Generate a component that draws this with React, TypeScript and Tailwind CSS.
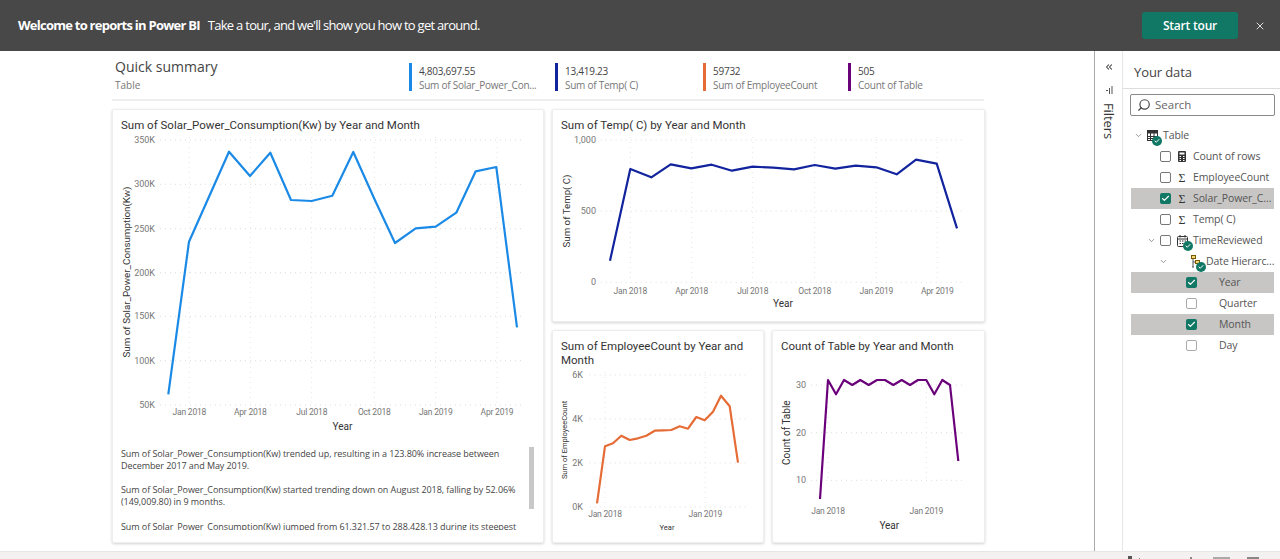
import { Check, ChevronDown, ChevronsLeft, Search, X } from "lucide-react";

const din = "Roboto, 'Liberation Sans', sans-serif";

type ChartProps = {
  box: [number, number, number, number];
  color: string;
  xs: number[];
  ys: number[];
  hGrid: number[];
  vGrid: number[];
  gridFrom: number;
  gridTo: number;
  yLabels: string[];
  xLabels: string[];
  labelRight: number;
  labelX: number;
  yearX: number;
  yearY: number;
  axisX: number;
  axisY: number;
  axisLabel: string;
  axisSize: number;
  yearSize?: number;
};

function LineChart(p: ChartProps) {
  const pts = p.xs.map((x, i) => x + "," + p.ys[i]).join(" ");
  return (
    <svg
      viewBox={p.box.join(" ")}
      width={p.box[2]}
      height={p.box[3]}
      className="block shrink-0"
      style={{ fontFamily: din }}
    >
      {p.hGrid.map((y) => (
        <line key={y} x1={p.gridFrom} x2={p.gridTo} y1={y} y2={y} stroke="#dcdcdc" strokeDasharray="1 4" />
      ))}
      {p.vGrid.map((x) => (
        <line key={x} x1={x} x2={x} y1={p.hGrid[0] - 8} y2={p.hGrid[p.hGrid.length - 1]} stroke="#e6e6e6" strokeDasharray="1 4" />
      ))}
      {p.yLabels.map((t, i) => (
        <text key={t} x={p.labelRight} y={p.hGrid[i] + 3} textAnchor="end" fontSize="9" fill="#777">
          {t}
        </text>
      ))}
      {p.xLabels.map((t, i) => (
        <text key={t} x={p.vGrid[i]} y={p.labelX + 3} textAnchor="middle" fontSize="8.5" letterSpacing="-0.2" fill="#777">
          {t}
        </text>
      ))}
      <text x={p.yearX} y={p.yearY + 3.5} textAnchor="middle" fontSize={p.yearSize ?? 10} fill="#333">
        Year
      </text>
      <text
        x={p.axisX}
        y={p.axisY}
        textAnchor="middle"
        fontSize={p.axisSize}
        fill="#333"
        transform={"rotate(-90 " + p.axisX + " " + p.axisY + ")"}
        dominantBaseline="middle"
      >
        {p.axisLabel}
      </text>
      <polyline points={pts} fill="none" stroke={p.color} strokeWidth="2.2" strokeLinejoin="round" />
    </svg>
  );
}

function Card({ title, titleH, children, className }: { title: string; titleH: string; children: React.ReactNode; className: string }) {
  return (
    <div className={"flex flex-col overflow-hidden rounded-[2px] border border-[#eeeeee] bg-white shadow-[0_1px_3px_rgba(0,0,0,0.18)] " + className}>
      <div
        className={"px-2 pt-[8px] text-[11.5px] leading-[14px] text-[#333] " + titleH}
        style={{ fontFamily: din }}
      >
        {title}
      </div>
      {children}
    </div>
  );
}

function Kpi({ value, label, color, width }: { value: string; label: string; color: string; width: string }) {
  return (
    <div className={"flex gap-[7px] " + width}>
      <div className={"h-[28px] w-[3px] " + color} />
      <div className="mt-[1px] text-[10px] leading-[14px] tracking-[-0.25px] text-[#444]">
        <div>{value}</div>
        <div className="text-[#777]">{label}</div>
      </div>
    </div>
  );
}

function Box({ checked, light }: { checked?: boolean; light?: boolean }) {
  if (checked) {
    return (
      <div className="flex h-[11px] w-[11px] shrink-0 items-center justify-center rounded-[2px] bg-[#117865]">
        <Check size={9} color="white" strokeWidth={3} />
      </div>
    );
  }
  return <div className={"h-[11px] w-[11px] shrink-0 rounded-[2px] border bg-white " + (light ? "border-[#aaa]" : "border-[#777]")} />;
}

function Badge({ className }: { className: string }) {
  return (
    <div className={"absolute flex h-[10px] w-[10px] items-center justify-center rounded-full bg-[#117865] " + className}>
      <Check size={6} color="white" strokeWidth={4} />
    </div>
  );
}

function TableIcon() {
  return (
    <svg width="11" height="11" viewBox="0 0 11 11" className="shrink-0">
      <rect x="0.5" y="0.5" width="10" height="10" fill="none" stroke="#333" />
      <rect x="0.5" y="0.5" width="10" height="3" fill="#333" />
      <path d="M0 6.5H11M0 8.5H11M3.5 3V11M7 3V11" stroke="#333" strokeWidth="1" />
    </svg>
  );
}

function CalendarIcon() {
  return (
    <svg width="11" height="12" viewBox="0 0 11 12" className="shrink-0">
      <rect x="0.5" y="1.5" width="10" height="10" rx="1" fill="none" stroke="#333" />
      <path d="M0.5 4H10.5M3 0V2.5M8 0V2.5" stroke="#333" />
      <path d="M2.5 6H4M5 6H6.5M7.5 6H9M2.5 8.5H4M5 8.5H6.5" stroke="#333" />
    </svg>
  );
}

function CalcIcon() {
  return (
    <svg width="8" height="11" viewBox="0 0 8 11" className="shrink-0">
      <rect width="8" height="11" rx="1" fill="#333" />
      <rect x="1.5" y="1.5" width="5" height="2" fill="white" />
      <path d="M1.5 5.5H3M5 5.5H6.5M1.5 7.5H3M5 7.5H6.5M1.5 9.5H3M5 9.5H6.5" stroke="white" />
    </svg>
  );
}

function HierarchyIcon() {
  return (
    <svg width="9" height="14" viewBox="0 0 9 14" className="shrink-0">
      <rect x="0.5" y="0.5" width="4" height="3" fill="#f5d878" stroke="#7a5b00" />
      <rect x="4.5" y="5.5" width="4" height="3" fill="#f5d878" stroke="#7a5b00" />
      <path d="M2 4V12M2 7H4M1 12H3" stroke="#555" />
    </svg>
  );
}

const Sigma = () => <span className="w-[9px] shrink-0 text-center text-[12px] leading-none text-[#333]" style={{ fontFamily: "'Liberation Serif', serif" }}>Σ</span>;

function Field({ icon, label, active }: { icon: React.ReactNode; label: string; active?: boolean }) {
  return (
    <div className={"flex h-[21px] items-center pl-[29px] " + (active ? "bg-[#c8c6c4]" : "")}>
      <Box checked={active} />
      <div className="ml-[6px] flex w-[10px] justify-center">{icon}</div>
      <span className="ml-[6px] whitespace-nowrap text-[10.5px] tracking-[-0.1px] text-[#555]">{label}</span>
    </div>
  );
}

function DatePart({ label, active }: { label: string; active?: boolean }) {
  return (
    <div className={"flex h-[21px] items-center pl-[55px] " + (active ? "bg-[#c8c6c4]" : "")}>
      <Box checked={active} light />
      <span className="ml-[22px] text-[10.5px] tracking-[-0.1px] text-[#555]">{label}</span>
    </div>
  );
}

const solar = {
  xs: [168.3, 189, 209, 229, 250, 270.3, 291, 311.7, 332.3, 353.3, 374.3, 395, 415.7, 435.7, 456.3, 475.7, 496.3, 517],
  ys: [394.3, 241.7, 196.7, 151.7, 176, 152.7, 200, 201, 195.7, 152, 198.7, 243, 228.3, 226.7, 212.7, 171.3, 167, 327.3],
};
const temp = {
  xs: [610, 630.3, 651.3, 670.7, 691.3, 711.7, 732, 752.7, 773.3, 794, 814.7, 835.3, 855.7, 876.3, 896.7, 916, 936.7, 957],
  ys: [260.7, 169, 177.3, 164.3, 168.3, 164.7, 170.7, 166.7, 167.7, 169.3, 165, 168.7, 165.7, 167.3, 174.3, 159.7, 163.7, 228.3],
};
const employees = {
  xs: [597, 605, 613, 621.3, 629.7, 638, 646.3, 654.7, 663, 671.3, 679.7, 688, 696.3, 704.7, 713, 721, 729.7, 738],
  ys: [503.3, 446.3, 443.3, 435.7, 440, 438.3, 435.7, 430.7, 430.3, 430, 426.3, 428.7, 417, 420.3, 411.7, 395.7, 406.3, 462.7],
};
const count = {
  xs: [820, 828, 836, 844, 852.3, 860.3, 868.7, 877, 885, 893.3, 901.7, 910, 918, 926.3, 934.3, 942.3, 950, 958.3],
  ys: [499, 380, 394.3, 380, 385, 380, 385, 380, 380, 385, 380, 385, 380, 380, 394.3, 380, 385, 461],
};

export default function App() {
  return (
    <div className="flex h-[559px] w-[1280px] flex-col overflow-hidden bg-white" style={{ fontFamily: "'Open Sans', sans-serif" }}>
      {/* Tour banner */}
      <div className="flex h-[51px] shrink-0 items-center bg-[#484848] pl-[18px] pr-[14px] text-[13px] text-white">
        <span className="mt-[1px] font-bold tracking-[-0.75px]">Welcome to reports in Power BI</span>
        <span className="ml-[8px] mt-[1px] tracking-[-0.72px]">Take a tour, and we'll show you how to get around.</span>
        <button className="ml-auto h-[27px] w-[96px] rounded-[3px] bg-[#117865] text-[12px] font-semibold tracking-[-0.2px] text-white">Start tour</button>
        <X size={12} className="ml-[16px] text-[#ddd]" />
      </div>

      <div className="flex min-h-0 flex-1">
        {/* Report canvas */}
        <div className="w-[1094px] shrink-0 pl-[112px]">
          <div className="flex h-[50px] w-[872px] border-b-2 border-[#eeeeee]">
            <div className="w-[297px] pl-[3px] pt-[6px]">
              <div className="text-[14px] leading-[20px] text-[#444]">Quick summary</div>
              <div className="mt-[1px] text-[10px] leading-[14px] text-[#777]">Table</div>
            </div>
            <div className="flex pt-[12px]">
              <Kpi value="4,803,697.55" label="Sum of Solar_Power_Con..." color="bg-[#1b8ae6]" width="w-[146px]" />
              <Kpi value="13,419.23" label="Sum of Temp( C)" color="bg-[#12239e]" width="w-[148px]" />
              <Kpi value="59732" label="Sum of EmployeeCount" color="bg-[#e66c37]" width="w-[145px]" />
              <Kpi value="505" label="Count of Table" color="bg-[#6b007b]" width="w-[130px]" />
            </div>
          </div>

          <div className="mt-[8px] flex gap-[8px]">
            <Card title="Sum of Solar_Power_Consumption(Kw) by Year and Month" titleH="h-[24px] shrink-0" className="h-[434px] w-[432px]">
              <LineChart
                box={[113, 134, 430, 306]}
                color="#1b8ae6"
                {...solar}
                hGrid={[140, 184.3, 228.7, 272.7, 316.3, 360.7, 405]}
                vGrid={[189.3, 250.3, 311.7, 374.3, 435.7, 497]}
                gridFrom={160}
                gridTo={525}
                yLabels={["350K", "300K", "250K", "200K", "150K", "100K", "50K"]}
                xLabels={["Jan 2018", "Apr 2018", "Jul 2018", "Oct 2018", "Jan 2019", "Apr 2019"]}
                labelRight={155}
                labelX={412}
                yearX={342.5}
                yearY={426}
                axisX={127}
                axisY={272}
                axisLabel="Sum of Solar_Power_Consumption(Kw)"
                axisSize={9.8}
              />
              <div className="relative h-[90px] overflow-hidden pl-2 pr-[20px] pt-[8px] text-[9px] leading-[12px] tracking-[-0.07px] text-[#444]">
                <p>Sum of Solar_Power_Consumption(Kw) trended up, resulting in a 123.80% increase between December 2017 and May 2019.</p>
                <p className="mt-[12px]">Sum of Solar_Power_Consumption(Kw) started trending down on August 2018, falling by 52.06% (149,009.80) in 9 months.</p>
                <p className="mt-[13px]">Sum of Solar_Power_Consumption(Kw) jumped from 61,321.57 to 288,428.13 during its steepest incline between December 2017 and February 2018.</p>
                <div className="absolute right-[9px] top-[7px] h-[62px] w-[5px] bg-[#c8c8c8]" />
              </div>
            </Card>

            <div className="flex w-[433px] flex-col gap-[8px]">
              <Card title="Sum of Temp( C) by Year and Month" titleH="h-[24px] shrink-0" className="h-[213px]">
                <LineChart
                  box={[553, 134, 431, 186]}
                  color="#12239e"
                  {...temp}
                  hGrid={[140, 211, 282.3]}
                  vGrid={[630.3, 691.7, 752.7, 814.7, 876.3, 937.3]}
                  gridFrom={600.7}
                  gridTo={963}
                  yLabels={["1,000", "500", "0"]}
                  xLabels={["Jan 2018", "Apr 2018", "Jul 2018", "Oct 2018", "Jan 2019", "Apr 2019"]}
                  labelRight={596}
                  labelX={290.7}
                  yearX={783}
                  yearY={303.7}
                  axisX={567}
                  axisY={211}
                  axisLabel="Sum of Temp( C)"
                  axisSize={9.7}
                />
              </Card>
              <div className="flex gap-[8px]">
                <Card title="Sum of EmployeeCount by Year and Month" titleH="h-[40px] shrink-0" className="h-[213px] w-[212px]">
                  <LineChart
                    box={[553, 371, 210, 170]}
                    color="#e66c37"
                    {...employees}
                    hGrid={[375, 419, 463, 507]}
                    vGrid={[605, 705.3]}
                    gridFrom={589.7}
                    gridTo={746}
                    yLabels={["6K", "4K", "2K", "0K"]}
                    xLabels={["Jan 2018", "Jan 2019"]}
                    labelRight={583}
                    labelX={514}
                    yearX={667}
                    yearY={526.3}
                    yearSize={7.5}
                    axisX={565}
                    axisY={440}
                    axisLabel="Sum of EmployeeCount"
                    axisSize={7.5}
                  />
                </Card>
                <Card title="Count of Table by Year and Month" titleH="h-[40px] shrink-0" className="h-[213px] w-[213px]">
                  <LineChart
                    box={[773, 371, 211, 170]}
                    color="#6b007b"
                    {...count}
                    hGrid={[385, 432.7, 480.3]}
                    vGrid={[828, 926.3]}
                    gridFrom={811}
                    gridTo={965}
                    yLabels={["30", "20", "10"]}
                    xLabels={["Jan 2018", "Jan 2019"]}
                    labelRight={806}
                    labelX={511.3}
                    yearX={889.3}
                    yearY={525}
                    axisX={787}
                    axisY={432.7}
                    axisLabel="Count of Table"
                    axisSize={10}
                  />
                </Card>
              </div>
            </div>
          </div>
        </div>

        {/* Filters pane */}
        <div className="flex w-[29px] shrink-0 flex-col items-center border-l border-r border-l-[#aaaaaa] border-r-[#e6e6e6] pt-[11px]">
          <ChevronsLeft size={10} strokeWidth={2.5} className="text-[#444]" />
          <svg width="8" height="8" viewBox="0 0 8 8" className="mt-[14px]">
            <path d="M7 0V8M4.5 2V8M1 4.5H3" stroke="#555" />
          </svg>
          <span className="mt-[9px] text-[13px] font-medium leading-none tracking-[-0.1px] text-[#333]" style={{ writingMode: "vertical-rl" }}>Filters</span>
        </div>

        {/* Data pane */}
        <div className="flex-1">
          <div className="flex h-[38px] items-center border-b border-[#dddddd] pl-[11px] pt-[6px] text-[13px] font-medium tracking-[-0.1px] text-[#444]">Your data</div>
          <div className="ml-[7px] mr-[8px] mt-[5px] flex h-[22px] items-center rounded-[2px] border border-[#8a8a8a] pl-[6px] text-[11.5px] text-[#666]">
            <Search size={14} className="-scale-x-100 text-[#444]" />
            <span className="ml-[4px]">Search</span>
          </div>
          <div className="ml-[8px] mr-[9px] mt-[9px] text-[10.5px]">
            <div className="relative flex h-[21px] items-center pl-[3px]">
              <ChevronDown size={9} className="text-[#777]" />
              <div className="relative ml-[4px]">
                <TableIcon />
                <Badge className="left-[5px] top-[6px]" />
              </div>
              <span className="ml-[5px] tracking-[-0.1px] text-[#555]">Table</span>
            </div>
            <Field icon={<CalcIcon />} label="Count of rows" />
            <Field icon={<Sigma />} label="EmployeeCount" />
            <Field icon={<Sigma />} label="Solar_Power_C..." active />
            <Field icon={<Sigma />} label="Temp( C)" />
            <div className="flex h-[21px] items-center pl-[16px]">
              <ChevronDown size={9} className="text-[#777]" />
              <div className="ml-[4px]"><Box /></div>
              <div className="relative ml-[6px]">
                <CalendarIcon />
                <Badge className="left-[6px] top-[6px]" />
              </div>
              <span className="ml-[5px] tracking-[-0.1px] text-[#555]">TimeReviewed</span>
            </div>
            <div className="flex h-[21px] items-center pl-[28px]">
              <ChevronDown size={9} className="text-[#777]" />
              <div className="relative ml-[23px]">
                <HierarchyIcon />
                <Badge className="left-[5px] top-[7px]" />
              </div>
              <span className="ml-[6px] whitespace-nowrap tracking-[-0.1px] text-[#555]">Date Hierarc...</span>
            </div>
            <DatePart label="Year" active />
            <DatePart label="Quarter" />
            <DatePart label="Month" active />
            <DatePart label="Day" />
          </div>
        </div>
      </div>

      {/* Status bar, mostly cut off by the window */}
      <div className="flex h-[8px] shrink-0 items-end border-t border-[#e6e6e6] bg-[#f3f2f1] pl-[1128px]">
        <div className="h-[3px] w-[4px] bg-[#555]" />
        <div className="ml-[7px] h-[1px] w-[1px] bg-[#888]" />
        <div className="ml-[50px] h-[2px] w-[2px] bg-[#888]" />
        <div className="ml-[21px] h-[2px] w-[17px] bg-[#aaa]" />
        <div className="ml-[17px] h-[2px] w-[12px] bg-[#888]" />
      </div>
    </div>
  );
}
